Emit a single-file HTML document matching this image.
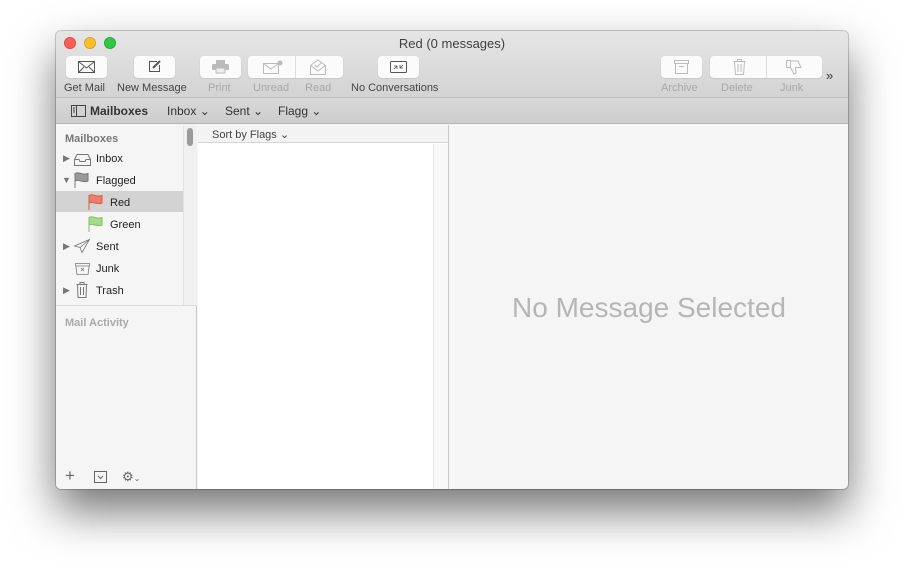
<!DOCTYPE html>
<html><head><meta charset="utf-8"><style>
*{margin:0;padding:0;box-sizing:border-box}
body{width:904px;height:569px;background:#fff;font-family:"Liberation Sans",sans-serif;position:relative;overflow:hidden}
.win{position:absolute;left:56px;top:31px;width:792px;height:458px;border-radius:5px;overflow:hidden;box-shadow:0 22px 45px rgba(0,0,0,.55),0 0 0 1px rgba(0,0,0,.2);background:#f5f5f5}
.tb{position:absolute;left:0;top:0;width:792px;height:67px;background:linear-gradient(#e6e6e6,#d3d3d3);border-bottom:1px solid #bdbdbd}
.tab{position:absolute;left:0;top:67px;width:792px;height:26px;background:linear-gradient(#d8d8d8,#cdcdcd);border-bottom:1px solid #b4b4b4;font-size:12px;color:#333}
.dot{position:absolute;top:6px;width:12px;height:12px;border-radius:50%}
.title{position:absolute;top:5px;left:0;width:792px;text-align:center;font-size:13px;color:#404040}
.btn{position:absolute;top:25px;height:22px;background:#fbfbfb;border-radius:4px;box-shadow:0 .5px 1px rgba(0,0,0,.15)}
.lbl{position:absolute;top:51px;font-size:11px;color:#444;white-space:nowrap}
.dis{color:#a8a8a8}
.side{position:absolute;left:0;top:94px;width:141px;height:364px;background:#f5f5f5;border-right:1px solid #c8c8c8;font-size:11px;color:#222}
.list{position:absolute;left:142px;top:94px;width:251px;height:364px;background:#fff;border-right:1px solid #c8c8c8}
.it{position:absolute;font-size:11px;color:#222}
svg{position:absolute}
</style></head><body>
<div class="win">
<div class="tb">
<div class="dot" style="left:8px;background:#fc5f57;border:.5px solid #de4a42"></div>
<div class="dot" style="left:28px;background:#fdbc2e;border:.5px solid #dea123"></div>
<div class="dot" style="left:48px;background:#33c748;border:.5px solid #27aa35"></div>
<div class="title">Red (0 messages)</div>
<div class="btn" style="left:10px;width:41px"></div>
<svg style="left:22px;top:30px" width="17" height="12"><rect x=".5" y=".5" width="16" height="11" fill="none" stroke="#555"/><path d="M.5 .5L8.5 7L16.5 .5M.5 11.5L6 6M16.5 11.5L11 6" fill="none" stroke="#555"/></svg>
<div class="lbl" style="left:8px">Get Mail</div>
<div class="btn" style="left:78px;width:41px"></div>
<svg style="left:92px;top:28px" width="14" height="14"><path d="M9 2.5H1.5V12.5H11.5V6" fill="none" stroke="#555"/><path d="M5 9L12 2" stroke="#555" stroke-width="2"/></svg>
<div class="lbl" style="left:61px">New Message</div>
<div class="btn" style="left:144px;width:41px"></div>
<svg style="left:156px;top:29px" width="17" height="14"><rect x="4" y="0" width="9" height="4" fill="#bbb"/><rect x="0" y="4" width="17" height="6" rx="1" fill="#bbb"/><rect x="4" y="8" width="9" height="5" fill="#eee" stroke="#bbb"/></svg>
<div class="lbl dis" style="left:152px">Print</div>
<div class="btn" style="left:192px;width:95px"></div><div style="position:absolute;left:239px;top:25px;width:1px;height:22px;background:#ddd"></div>
<svg style="left:207px;top:29px" width="20" height="15"><rect x=".5" y="3.5" width="15" height="10" fill="none" stroke="#bbb"/><path d="M.5 3.5L8 9L15.5 3.5" fill="none" stroke="#bbb"/><circle cx="17" cy="3" r="2.5" fill="#bbb"/></svg>
<div class="lbl dis" style="left:197px">Unread</div>
<svg style="left:254px;top:28px" width="16" height="16"><path d="M.5 6.5L8 1L15.5 6.5V15.5H.5Z M.5 6.5L8 12L15.5 6.5" fill="none" stroke="#bbb"/><path d="M5 6L7 8L11 4" fill="none" stroke="#bbb"/></svg>
<div class="lbl dis" style="left:249px">Read</div>
<div class="btn" style="left:322px;width:41px"></div>
<svg style="left:334px;top:30px" width="17" height="12"><rect x=".5" y=".5" width="16" height="11" rx="1" fill="none" stroke="#555"/><path d="M4 8L7 5M4 5H7V8M13 4L10 7M10 4V7H13" fill="none" stroke="#555" stroke-width=".8"/></svg>
<div class="lbl" style="left:295px">No Conversations</div>
<div class="btn" style="left:605px;width:41px"></div>
<svg style="left:618px;top:29px" width="15" height="14"><rect x=".5" y=".5" width="14" height="3" fill="none" stroke="#bbb"/><path d="M1.5 3.5V13.5H13.5V3.5M5 6.5H10" fill="none" stroke="#bbb"/></svg>
<div class="lbl dis" style="left:605px">Archive</div>
<div class="btn" style="left:654px;width:112px"></div><div style="position:absolute;left:710px;top:25px;width:1px;height:22px;background:#ddd"></div>
<svg style="left:677px;top:28px" width="13" height="16"><path d="M.5 2.5H12.5M4.5 2.5V.5H8.5V2.5M1.5 2.5L2.5 15.5H10.5L11.5 2.5M5 5V13M8 5V13" fill="none" stroke="#bbb"/></svg>
<div class="lbl dis" style="left:665px">Delete</div>
<svg style="left:730px;top:29px" width="16" height="15"><path d="M.5 .5H4.5V7.5H.5ZM4.5 1H12L15 7.5H9.5L10 13L8 14L4.5 7.5" fill="none" stroke="#bbb"/></svg>
<div class="lbl dis" style="left:724px">Junk</div>
<div class="lbl" style="left:770px;top:37px;font-size:13px;color:#333">»</div>
</div>
<div class="tab">
<svg style="left:15px;top:7px" width="15" height="12"><rect x=".5" y=".5" width="14" height="11" fill="none" stroke="#444"/><path d="M5.5 .5V11.5M2 3H4M2 5H4M2 7H4" stroke="#444"/></svg>
<div style="position:absolute;left:34px;top:6px;font-weight:bold">Mailboxes</div>
<div style="position:absolute;left:111px;top:6px">Inbox ⌄</div>
<div style="position:absolute;left:169px;top:6px">Sent ⌄</div>
<div style="position:absolute;left:222px;top:6px">Flagg ⌄</div>
</div>
<div class="side">
<div style="position:absolute;left:127px;top:0;width:14px;height:180px;background:#f0f0f0;border-left:1px solid #e2e2e2"></div>
<div style="position:absolute;left:131px;top:3px;width:6px;height:18px;border-radius:3px;background:#9a9a9a"></div>
<div style="position:absolute;left:0;top:180px;width:141px;height:1px;background:#ddd"></div>
<div style="position:absolute;left:9px;top:8px;font-weight:bold;color:#777">Mailboxes</div>
<div style="position:absolute;left:0;top:66px;width:127px;height:21px;background:#d3d3d3"></div>
<div class="it" style="left:7px;top:28px;color:#777;font-size:9px">▶</div><div class="it" style="left:40px;top:28px">Inbox</div>
<svg style="left:18px;top:29px" width="17" height="12"><path d="M.5 5.5L3 .5H14L16.5 5.5V11.5H.5Z M.5 5.5H5L6 7.5H11L12 5.5H16.5" fill="none" stroke="#777"/></svg>
<div class="it" style="left:6px;top:50px;color:#777;font-size:9px">▼</div><div class="it" style="left:40px;top:50px">Flagged</div>
<svg style="left:18px;top:47px" width="16" height="17"><path d="M1 16V1.5C5-1 9 4 14 1.5V9C9 11.5 5 6.5 1 9" fill="#999" stroke="#777"/></svg>
<div class="it" style="left:54px;top:72px">Red</div>
<svg style="left:32px;top:69px" width="16" height="17"><path d="M1 16V1.5C5-1 9 4 14 1.5V9C9 11.5 5 6.5 1 9" fill="#ef7d6a" stroke="#d85a48"/></svg>
<div class="it" style="left:54px;top:94px">Green</div>
<svg style="left:32px;top:91px" width="16" height="17"><path d="M1 16V1.5C5-1 9 4 14 1.5V9C9 11.5 5 6.5 1 9" fill="#a7d98a" stroke="#7cc35a"/></svg>
<div class="it" style="left:7px;top:116px;color:#777;font-size:9px">▶</div><div class="it" style="left:40px;top:116px">Sent</div>
<svg style="left:18px;top:114px" width="16" height="14"><path d="M15.5 .5L.5 7L6 8.5L8 13.5ZM15.5 .5L6 8.5" fill="none" stroke="#777" stroke-width=".8"/></svg>
<div class="it" style="left:40px;top:138px">Junk</div>
<svg style="left:19px;top:138px" width="15" height="12"><path d="M.5 .5H14.5L13 11.5H2Z M1 3H14" fill="none" stroke="#777" stroke-width=".8"/><path d="M6 5L9 8M9 5L6 8" stroke="#777" stroke-width=".8"/></svg>
<div class="it" style="left:7px;top:160px;color:#777;font-size:9px">▶</div><div class="it" style="left:40px;top:160px">Trash</div>
<svg style="left:20px;top:157px" width="12" height="16"><path d="M.5 2.5H11.5M4 2.5V.5H8V2.5M1.5 2.5L2 15.5H10L10.5 2.5M4.5 5V13M7.5 5V13" fill="none" stroke="#777"/></svg>
<div style="position:absolute;left:9px;top:192px;font-weight:bold;color:#aaa">Mail Activity</div>
<div style="position:absolute;left:9px;top:344px;font-size:17px;color:#666;line-height:14px">+</div>
<svg style="left:38px;top:346px" width="13" height="12"><rect x=".5" y=".5" width="12" height="11" fill="none" stroke="#666"/><path d="M4 5L6.5 7.5L9 5" fill="none" stroke="#666"/></svg>
<div style="position:absolute;left:66px;top:344px;font-size:13px;color:#666">⚙<span style="font-size:8px">⌄</span></div>
</div>
<div class="list">
<div style="position:absolute;left:0;top:0;width:250px;height:18px;background:#f3f3f3;border-bottom:1px solid #d6d6d6;font-size:11px;color:#444;padding:3px 0 0 14px">Sort by Flags ⌄</div>
<div style="position:absolute;left:235px;top:19px;width:15px;height:345px;background:#f8f8f8;border-left:1px solid #e6e6e6"></div>
</div>
<div style="position:absolute;left:394px;top:94px;width:398px;height:364px;text-align:center;padding-top:167px;font-size:28px;color:#b6b6b6">No Message Selected</div>
</div>
</body></html>
